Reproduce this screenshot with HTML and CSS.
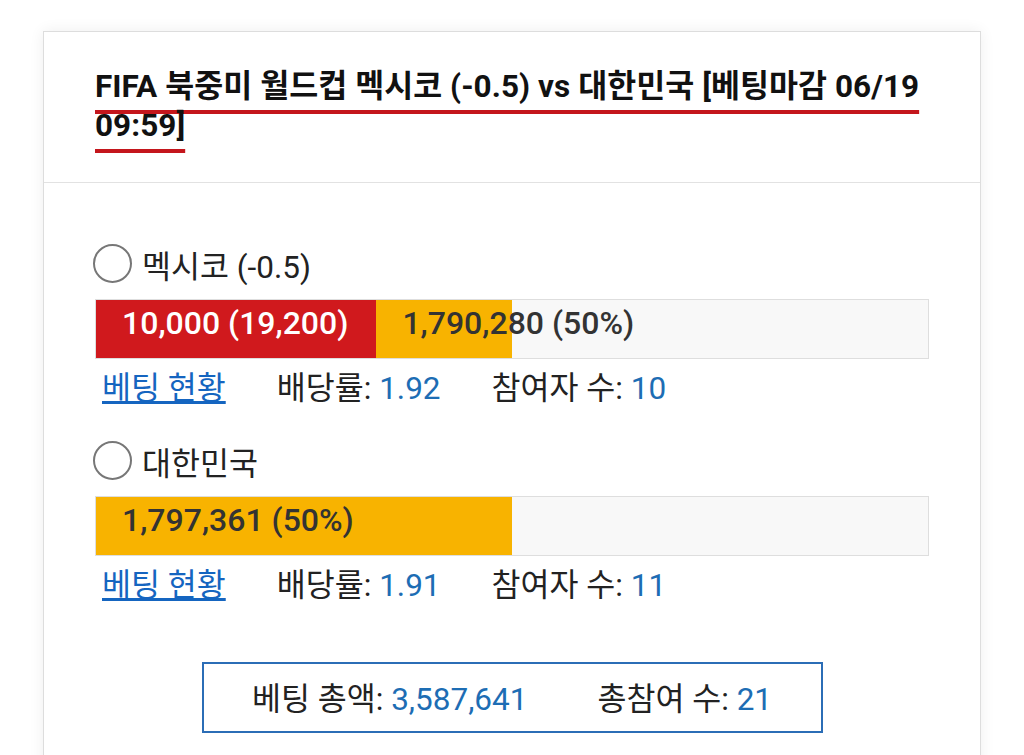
FILE: index.html
```html
<!DOCTYPE html>
<html lang="ko">
<head>
    <meta charset="UTF-8">
    <meta name="viewport" content="width=device-width, initial-scale=1.0">
    <title>베팅</title>
    <link rel="stylesheet" href="styles.css">
</head>
<body>
    <div class="card">
        <div class="card-head">
            <h2 class="match-title"><span>FIFA 북중미 월드컵 멕시코 (-0.5) vs 대한민국 [베팅마감 06/19 09:59]</span></h2>
        </div>

        <div class="card-body">
            <div class="option">
                <label class="pick"><input type="radio" name="pick"> 멕시코 (-0.5)</label>
                <div class="bar">
                    <div class="seg seg-mine" style="width: 33.7%">10,000 (19,200)</div>
                    <div class="seg seg-pool" style="width: 16.3%">1,790,280 (50%)</div>
                </div>
                <div class="stats">
                    <a href="#">베팅 현황</a>
                    <span>배당률: <span class="num">1.92</span></span>
                    <span>참여자 수: <span class="num">10</span></span>
                </div>
            </div>

            <div class="option">
                <label class="pick"><input type="radio" name="pick"> 대한민국</label>
                <div class="bar">
                    <div class="seg seg-pool" style="width: 50%">1,797,361 (50%)</div>
                </div>
                <div class="stats">
                    <a href="#">베팅 현황</a>
                    <span>배당률: <span class="num">1.91</span></span>
                    <span>참여자 수: <span class="num">11</span></span>
                </div>
            </div>

            <div class="totals">
                <span>베팅 총액: <span class="num">3,587,641</span></span>
                <span>총참여 수: <span class="num">21</span></span>
            </div>
        </div>
    </div>
</body>
</html>
```

FILE: styles.css
```css
body {
    font-family: Roboto, 'Noto Sans CJK KR', sans-serif;
    margin: 0;
    background: #ffffff;
    color: #222222;
}
.card {
    margin: 31px 43px 0 43px;
    background: #ffffff;
    border: 1px solid #dddddd;
    box-shadow: 0 0 14px rgba(0, 0, 0, 0.07);
}
.card-head {
    padding: 35px 51px 37px 51px;
    border-bottom: 1px solid #e2e2e2;
}
.match-title {
    margin: 0;
    font-size: 31.5px;
    line-height: 39px;
    font-weight: 700;
    letter-spacing: 0.05px;
    color: #111111;
}
.match-title span {
    text-decoration: underline;
    text-decoration-color: #c4161c;
    text-decoration-thickness: 4px;
    text-underline-offset: 13px;
    text-decoration-skip-ink: none;
}
.card-body {
    padding: 61px 51px 40px 51px;
}
.option {
    margin-bottom: 32px;
}
.pick {
    display: flex;
    align-items: center;
    gap: 10px;
    height: 39px;
    margin-left: -2px;
    font-size: 31.5px;
    color: #222222;
}
.pick input {
    appearance: none;
    margin: 0;
    width: 39px;
    height: 39px;
    border: 2px solid #777777;
    border-radius: 50%;
    background: #ffffff;
}
.bar {
    display: flex;
    height: 58px;
    margin-top: 16px;
    background: #f8f8f8;
    border: 1px solid #dedede;
}
.seg {
    box-sizing: border-box;
    padding-left: 26px;
    font-size: 32px;
    font-weight: 500;
    line-height: 47px;
    white-space: nowrap;
}
.seg-mine {
    background: #d0191d;
    color: #ffffff;
}
.seg-pool {
    background: #f8b300;
    color: #333333;
}
.stats {
    display: flex;
    gap: 51px;
    margin-top: 10px;
    padding-left: 7px;
    font-size: 31.5px;
    line-height: 40px;
}
.stats a {
    color: #1565c0;
    text-decoration: underline;
}
.num {
    color: #1d6db4;
}
.totals {
    display: flex;
    justify-content: center;
    gap: 70px;
    box-sizing: border-box;
    width: 621px;
    height: 71px;
    margin: 56px auto 0 auto;
    border: 2px solid #2b6db6;
    font-size: 31.5px;
    line-height: 72px;
}
```
